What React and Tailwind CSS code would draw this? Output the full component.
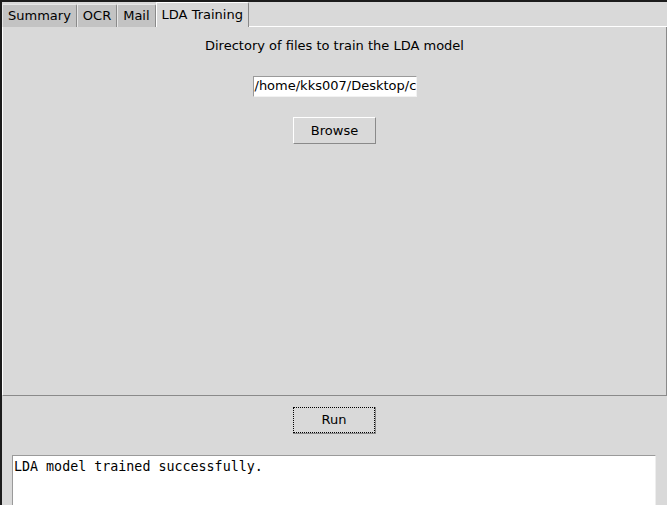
import React from 'react';

const tabs = ['Summary', 'OCR', 'Mail', 'LDA Training'];

export default function App() {
    const active = 'LDA Training';

    return (
        <div className="w-[667px] h-[505px] bg-[#1c1c1c] pl-[2px] pt-[2px] overflow-hidden font-['DejaVu_Sans',sans-serif] text-[13px] text-black">
            <div className="h-full bg-[#d9d9d9] flex flex-col">
                {/* Notebook tabs */}
                <div className="flex items-end h-[25px]">
                    {tabs.map((t) =>
                        t === active ? (
                            <div
                                key={t}
                                className="h-[25px] px-[5px] pt-[4px] bg-[#d9d9d9] border-l border-t border-white border-r border-r-[#8a8a8a] rounded-tr-[2px] leading-[16px]"
                            >
                                {t}
                            </div>
                        ) : (
                            <div
                                key={t}
                                className="h-[23px] px-[5px] pt-[3px] bg-[#c3c3c3] border-l border-t border-[#e6e6e6] border-r border-r-[#8a8a8a] rounded-tr-[2px] leading-[16px]"
                            >
                                {t}
                            </div>
                        )
                    )}
                    <div className="flex-1 h-[1px] bg-white" />
                </div>

                {/* Tab pane */}
                <div className="h-[369px] border-l border-white border-r border-r-[#8a8a8a] border-b border-b-[#8a8a8a] flex flex-col items-center pt-[11px]">
                    <div className="leading-[16px]">Directory of files to train the LDA model</div>
                    <div className="mt-[22px] w-[164px] h-[21px] bg-white border border-t-[#9a9a9a] border-l-[#9a9a9a] border-r-[#f2f2f2] border-b-[#f2f2f2] pl-[1px] overflow-hidden whitespace-nowrap leading-[18px]">
                        /home/kks007/Desktop/c
                    </div>
                    <button className="mt-[20px] w-[83px] h-[27px] bg-[#d9d9d9] border border-t-white border-l-white border-r-[#8a8a8a] border-b-[#8a8a8a] leading-[16px]">
                        Browse
                    </button>
                </div>

                {/* Run button */}
                <div className="flex justify-center mt-[11px]">
                    <button className="w-[83px] h-[27px] bg-[#d9d9d9] border-r border-b border-[#8a8a8a]">
                        <div className="h-full w-full border border-dotted border-black flex items-center justify-center leading-[16px]">
                            Run
                        </div>
                    </button>
                </div>

                {/* Output text */}
                <div className="mt-[21px] ml-[10px] w-[644px] flex-1 bg-white border-l border-t border-[#9a9a9a] border-r border-r-[#eeeeee] pl-[1px] pt-[3px] font-['DejaVu_Sans_Mono',monospace] text-[13.33px] leading-[16px]">
                    LDA model trained successfully.
                </div>
            </div>
        </div>
    );
}
